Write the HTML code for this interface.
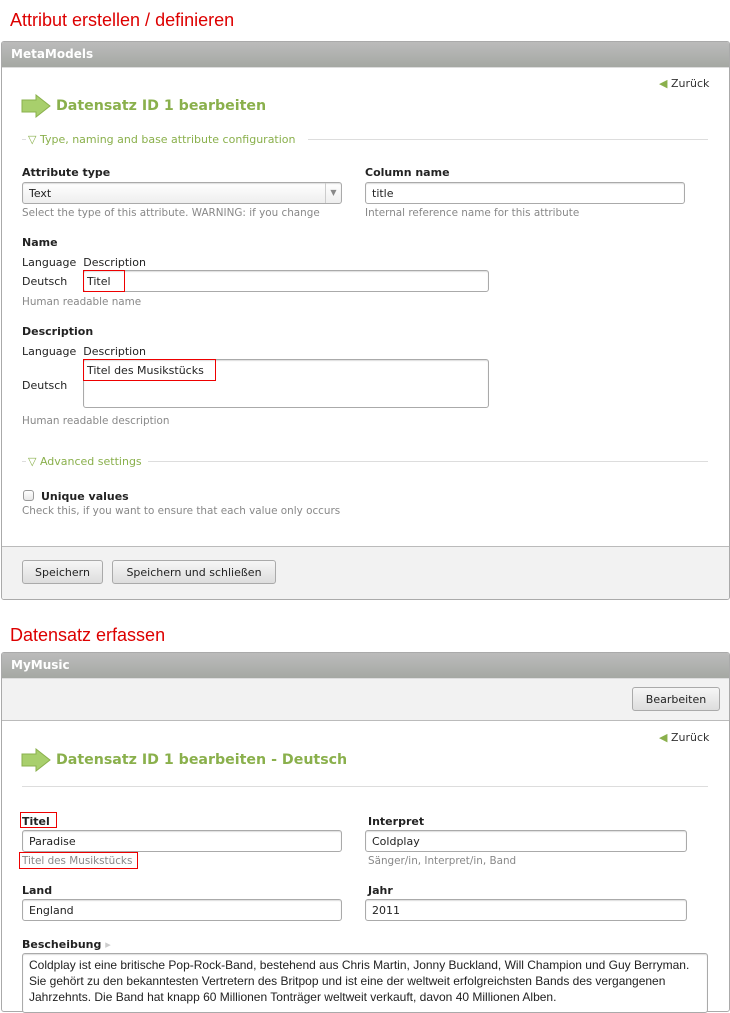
<!DOCTYPE html>
<html><head><meta charset="utf-8"><style>
*{box-sizing:border-box;margin:0;padding:0}
body{width:730px;height:1000px;overflow:hidden;background:#fff;font-family:"DejaVu Sans",Verdana,sans-serif;font-size:11px;color:#222;position:relative}
.a{position:absolute;white-space:nowrap}
.red{color:#d00;font-family:"Liberation Sans",Arial,sans-serif;font-size:18px}
.panel{position:absolute;left:1px;width:729px;border:1px solid #aaa;border-radius:3px;background:#fff;overflow:hidden}
.hd{position:absolute;left:0;right:0;top:0;height:26px;background:linear-gradient(#bbb,#a5a8a3);color:#fff;font-weight:bold;font-size:12px;padding:5px 0 0 9px;border-bottom:1px solid #ddd}
.h1{font-weight:bold;color:#8ab04c;font-size:14.2px}
.lbl{font-weight:bold;font-size:11px}
.hint{color:#888;font-size:10.4px}
.inp{position:absolute;border:1px solid #aaa;border-radius:3px;background:#fff;padding:4px 6px 0;font-size:11px;box-shadow:inset 0 1px 1px #ddd}
.leg{color:#8ab04c;font-size:11px}
.line{position:absolute;height:1px;background:#ddd}
.btn{position:absolute;border:1px solid #aaa;border-radius:3px;background:linear-gradient(#f6f6f6,#ddd);font-size:11px;text-align:center;padding-top:5px;height:24px}
.hl{position:absolute;border:1px solid #e00}
</style></head><body>
<div class="a red" style="left:10px;top:10px">Attribut erstellen / definieren</div>
<div class="panel" style="top:41px;height:559px">
 <div class="hd">MetaModels</div>
 <div style="position:absolute;left:0;right:0;top:504px;bottom:0;background:#f2f2f2;border-top:1px solid #bbb"></div>
</div>
<svg class="a" style="left:21px;top:94px" width="30" height="24"><polygon points="1,6 15,6 15,1 29,12 15,23 15,18 1,18" fill="#a8cf6c" stroke="#8ab04c"/></svg>
<div class="a h1" style="left:56px;top:98px">Datensatz ID 1 bearbeiten</div>
<div class="a" style="left:659px;top:77px;color:#333"><span style="color:#8ab04c">◀</span> Zurück</div>
<div class="line" style="left:22px;top:139px;width:4px"></div>
<div class="a leg" style="left:28px;top:133px">▽ Type, naming and base attribute configuration</div>
<div class="line" style="left:308px;top:139px;width:400px"></div>
<div class="a lbl" style="left:22px;top:166px">Attribute type</div>
<div class="inp" style="left:22px;top:182px;width:320px;height:22px;background:linear-gradient(#fff,#eee)">Text<span style="position:absolute;right:0;top:0;width:16px;height:20px;border-left:1px solid #ccc;color:#888;font-size:8px;text-align:center;padding-top:5px">▼</span></div>
<div class="a hint" style="left:22px;top:207px">Select the type of this attribute. WARNING: if you change</div>
<div class="a lbl" style="left:365px;top:166px">Column name</div>
<div class="inp" style="left:365px;top:182px;width:320px;height:22px">title</div>
<div class="a hint" style="left:365px;top:207px">Internal reference name for this attribute</div>
<div class="a lbl" style="left:22px;top:236px">Name</div>
<div class="a" style="left:22px;top:256px">Language&nbsp; Description</div>
<div class="a" style="left:22px;top:275px">Deutsch</div>
<div class="inp" style="left:83px;top:270px;width:406px;height:22px"></div>
<div class="hl" style="left:83px;top:270px;width:42px;height:22px"></div>
<div class="a" style="left:87px;top:275px">Titel</div>
<div class="a hint" style="left:22px;top:296px">Human readable name</div>
<div class="a lbl" style="left:22px;top:325px">Description</div>
<div class="a" style="left:22px;top:345px">Language&nbsp; Description</div>
<div class="a" style="left:22px;top:379px">Deutsch</div>
<div class="inp" style="left:83px;top:359px;width:406px;height:49px"></div>
<div class="hl" style="left:83px;top:359px;width:133px;height:22px"></div>
<div class="a" style="left:87px;top:364px">Titel des Musikstücks</div>
<div class="a hint" style="left:22px;top:415px">Human readable description</div>
<div class="line" style="left:22px;top:461px;width:4px"></div>
<div class="a leg" style="left:28px;top:455px">▽ Advanced settings</div>
<div class="line" style="left:148px;top:461px;width:560px"></div>
<div class="a" style="left:23px;top:490px;width:11px;height:11px;border:1px solid #999;border-radius:3px;background:linear-gradient(#fff,#e8e8e8)"></div>
<div class="a lbl" style="left:41px;top:490px">Unique values</div>
<div class="a hint" style="left:22px;top:505px">Check this, if you want to ensure that each value only occurs</div>
<div class="btn" style="left:22px;top:560px;width:81px">Speichern</div>
<div class="btn" style="left:112px;top:560px;width:164px">Speichern und schließen</div>

<div class="a red" style="left:10px;top:625px">Datensatz erfassen</div>
<div class="panel" style="top:652px;height:360px">
 <div class="hd">MyMusic</div>
 <div style="position:absolute;left:0;right:0;top:26px;height:42px;background:#f2f2f2;border-bottom:1px solid #bbb"></div>
</div>
<div class="btn" style="left:632px;top:687px;width:88px">Bearbeiten</div>
<div class="a" style="left:659px;top:731px;color:#333"><span style="color:#8ab04c">◀</span> Zurück</div>
<svg class="a" style="left:21px;top:748px" width="30" height="24"><polygon points="1,6 15,6 15,1 29,12 15,23 15,18 1,18" fill="#a8cf6c" stroke="#8ab04c"/></svg>
<div class="a h1" style="left:56px;top:752px">Datensatz ID 1 bearbeiten - Deutsch</div>
<div class="line" style="left:22px;top:786px;width:686px"></div>
<div class="a lbl" style="left:22px;top:815px">Titel</div>
<div class="hl" style="left:20px;top:812px;width:37px;height:16px"></div>
<div class="inp" style="left:22px;top:830px;width:320px;height:22px">Paradise</div>
<div class="a hint" style="left:22px;top:855px">Titel des Musikstücks</div>
<div class="hl" style="left:19px;top:852px;width:119px;height:17px"></div>
<div class="a lbl" style="left:368px;top:815px">Interpret</div>
<div class="inp" style="left:365px;top:830px;width:322px;height:22px">Coldplay</div>
<div class="a hint" style="left:368px;top:855px">Sänger/in, Interpret/in, Band</div>
<div class="a lbl" style="left:22px;top:884px">Land</div>
<div class="inp" style="left:22px;top:899px;width:320px;height:22px">England</div>
<div class="a lbl" style="left:368px;top:884px">Jahr</div>
<div class="inp" style="left:365px;top:899px;width:322px;height:22px">2011</div>
<div class="a lbl" style="left:22px;top:938px">Bescheibung <span style="color:#ccc">▸</span></div>
<div class="inp" style="left:22px;top:953px;width:686px;height:60px;line-height:16px;white-space:nowrap;overflow:hidden;font-family:'Liberation Sans Narrow','Liberation Sans',sans-serif;font-size:12px;padding-top:3px">Coldplay ist eine britische Pop-Rock-Band, bestehend aus Chris Martin, Jonny Buckland, Will Champion und Guy Berryman.<br>Sie gehört zu den bekanntesten Vertretern des Britpop und ist eine der weltweit erfolgreichsten Bands des vergangenen<br>Jahrzehnts. Die Band hat knapp 60 Millionen Tonträger weltweit verkauft, davon 40 Millionen Alben.</div>
</body></html>
